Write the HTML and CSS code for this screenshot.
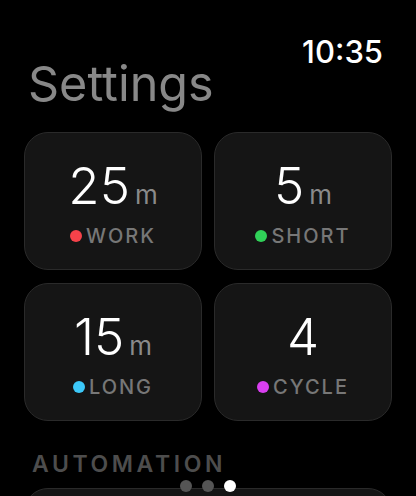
FILE: index.html
```html
<!DOCTYPE html>
<html>
    <head>
        <title>Settings</title>
        <meta charset="utf-8">
        <link rel="stylesheet" href="styles.css">
    </head>
    <body>
        <div id="screen">
            <div class="topbar">
                <span class="clock">10:35</span>
            </div>
            <h1 class="title">Settings</h1>

            <div class="grid">
                <div class="tile">
                    <div class="value">25<span class="unit">m</span></div>
                    <div class="label"><span class="dot work"></span>WORK</div>
                </div>
                <div class="tile">
                    <div class="value">5<span class="unit">m</span></div>
                    <div class="label"><span class="dot short"></span>SHORT</div>
                </div>
                <div class="tile">
                    <div class="value">15<span class="unit">m</span></div>
                    <div class="label"><span class="dot long"></span>LONG</div>
                </div>
                <div class="tile">
                    <div class="value">4</div>
                    <div class="label"><span class="dot cycle"></span>CYCLE</div>
                </div>
            </div>

            <div class="section">AUTOMATION</div>
            <div class="tile wide"></div>
        </div>

        <div class="pager">
            <span class="page"></span>
            <span class="page"></span>
            <span class="page current"></span>
        </div>
    </body>
</html>
```

FILE: styles.css
```css
html, body {
    margin: 0;
    height: 100%;
    overflow: hidden;
}

body {
    background: #000;
    color: #fff;
    font-family: "Inter", "Liberation Sans", sans-serif;
}

#screen {
    padding: 42px 24px 0 24px;
}

.topbar {
    display: flex;
    justify-content: flex-end;
    padding-right: 9px;
}

.clock {
    font-size: 31px;
    line-height: 20px;
    font-weight: 500;
}

.title {
    margin: -2px 0 0 4px;
    font-size: 48.5px;
    line-height: 1;
    font-weight: 400;
    color: #888;
}

.grid {
    margin-top: 23px;
    display: grid;
    grid-template-columns: 178px 178px;
    column-gap: 12px;
    row-gap: 13px;
}

.tile {
    box-sizing: border-box;
    height: 138px;
    padding-top: 27px;
    background: #151515;
    border: 1px solid #2a2a2a;
    border-radius: 24px;
    display: flex;
    flex-direction: column;
    align-items: center;
}

.value {
    font-size: 51px;
    line-height: 1;
    font-weight: 300;
    display: flex;
    align-items: baseline;
}

.unit {
    font-size: 26px;
    font-weight: 400;
    color: #8a8a8a;
    margin-left: 5px;
}

.label {
    margin-top: 15px;
    font-size: 20px;
    line-height: 1;
    font-weight: 500;
    letter-spacing: 2px;
    color: #777;
    display: flex;
    align-items: center;
}

.dot {
    width: 12px;
    height: 12px;
    border-radius: 50%;
    margin-right: 4px;
}

.work { background: #f5424a; }
.short { background: #30d158; }
.long { background: #3cc8f8; }
.cycle { background: #d93ff0; }

.section {
    margin: 32px 0 0 8px;
    font-size: 23px;
    line-height: 1;
    font-weight: 600;
    letter-spacing: 3.6px;
    color: #4d4d4d;
}

.tile.wide {
    margin-top: 12px;
    height: 100px;
}

.pager {
    position: absolute;
    left: 0;
    right: 0;
    bottom: 4px;
    display: flex;
    justify-content: center;
    gap: 10px;
}

.page {
    width: 12px;
    height: 12px;
    border-radius: 50%;
    background: #555;
}

.page.current {
    background: #fff;
}
```
